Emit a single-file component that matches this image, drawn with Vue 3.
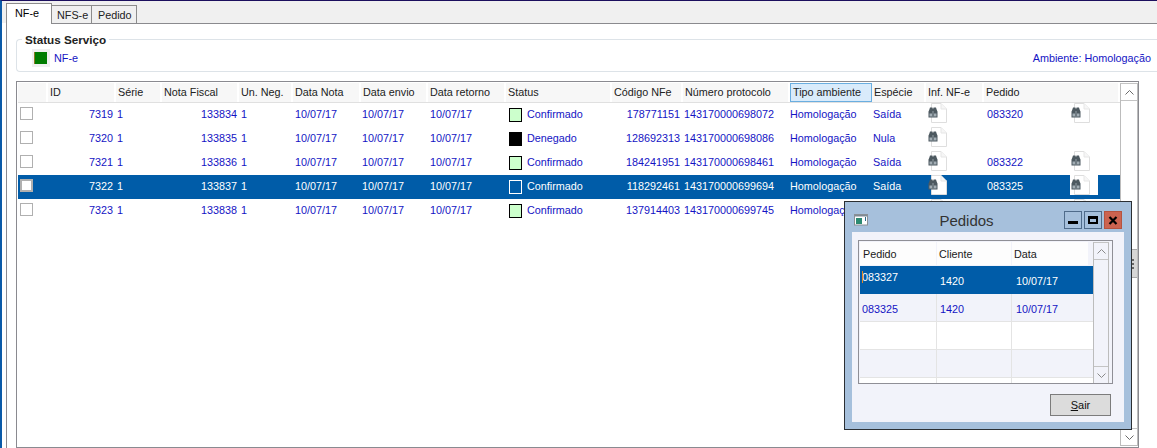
<script setup>
const columns = [
  { label: '', width: 30 },
  { label: 'ID', width: 68 },
  { label: 'Série', width: 46 },
  { label: 'Nota Fiscal', width: 77 },
  { label: 'Un. Neg.', width: 54 },
  { label: 'Data Nota', width: 68 },
  { label: 'Data envio', width: 67 },
  { label: 'Data retorno', width: 78 },
  { label: 'Status', width: 106 },
  { label: 'Código NFe', width: 71 },
  { label: 'Número protocolo', width: 107 },
  { label: 'Tipo ambiente', width: 82, active: true },
  { label: 'Espécie', width: 54 },
  { label: 'Inf. NF-e', width: 58 },
  { label: 'Pedido', width: 136 },
]
const rows = [
  { id: 7319, nota: 133834, status: 'Confirmado', swatch: 'ok', codigo: 178771151, prot: '143170000698072', especie: 'Saída', pedido: '083320', icon: true },
  { id: 7320, nota: 133835, status: 'Denegado', swatch: 'no', codigo: 128692313, prot: '143170000698086', especie: 'Nula', pedido: '', icon: false },
  { id: 7321, nota: 133836, status: 'Confirmado', swatch: 'ok', codigo: 184241951, prot: '143170000698461', especie: 'Saída', pedido: '083322', icon: true },
  { id: 7322, nota: 133837, status: 'Confirmado', swatch: 'sel', codigo: 118292461, prot: '143170000699694', especie: 'Saída', pedido: '083325', icon: true, selected: true },
  { id: 7323, nota: 133838, status: 'Confirmado', swatch: 'ok', codigo: 137914403, prot: '143170000699745', especie: '', pedido: '', icon: true },
]
const orders = [
  { pedido: '083327', cliente: '1420', data: '10/07/17', selected: true },
  { pedido: '083325', cliente: '1420', data: '10/07/17', alt: true },
  { pedido: '', cliente: '', data: '' },
  { pedido: '', cliente: '', data: '', alt: true },
  { pedido: '', cliente: '', data: '', last: true },
]
</script>

<template>
  <div class="window">
    <div class="tabs">
      <div class="tab active">NF-e</div>
      <div class="tab">NFS-e</div>
      <div class="tab">Pedido</div>
    </div>
    <div class="panel">
      <div class="group">
        <div class="group-title">Status Serviço</div>
        <div class="group-row">
          <span class="led"><span class="led-in"></span></span>
          <span class="link">NF-e</span>
          <span class="link env">Ambiente: Homologação</span>
        </div>
      </div>

      <div class="grid">
        <div class="grid-main">
          <div class="head">
            <div v-for="c in columns" :key="c.label" class="hcell" :class="{ hactive: c.active }" :style="{ width: c.width + 'px' }">{{ c.label }}</div>
          </div>
          <div v-for="r in rows" :key="r.id" class="row" :class="{ selected: r.selected }">
            <div class="c c0"><span class="check"></span></div>
            <div class="c c1">{{ r.id }}</div>
            <div class="c c2">1</div>
            <div class="c c3">{{ r.nota }}</div>
            <div class="c c4">1</div>
            <div class="c c5">10/07/17</div>
            <div class="c c6">10/07/17</div>
            <div class="c c7">10/07/17</div>
            <div class="c c8"><span class="swatch" :class="r.swatch"></span>{{ r.status }}</div>
            <div class="c c9">{{ r.codigo }}</div>
            <div class="c c10">{{ r.prot }}</div>
            <div class="c c11">Homologação</div>
            <div class="c c12">{{ r.especie }}</div>
            <div class="c c13">
              <svg class="doc" width="21" height="21" viewBox="0 0 21 21">
                <path d="M4.500 .5H14L19.500 6V19.500H4.500Z" fill="#fff" stroke="#dedede" />
                <path d="M14 .5V6H19.500" fill="#f6f6f6" stroke="#e6e6e6" />
                <path d="M3 4.500h2.500v1h1v-1h2.500l.8 2.500 .7 1.500v6h-9v-6l.7-1.500z" fill="#4d5960" />
                <path d="M2.500 10.500h2.500v3h-2.500zM7 10.500h2.500v3h-2.500z" fill="#a2adb4" />
                <path d="M5.600 8h.8v7h-.8z" fill="#a2adb4" />
              </svg>
            </div>
            <div class="c c14">{{ r.pedido }}</div>
            <div class="c c15">
              <span v-if="r.icon" class="icon-box">
                <svg class="doc" width="21" height="21" viewBox="0 0 21 21">
                  <path d="M4.500 .5H14L19.500 6V19.500H4.500Z" fill="#fff" stroke="#dedede" />
                  <path d="M14 .5V6H19.500" fill="#f6f6f6" stroke="#e6e6e6" />
                  <path d="M3 4.500h2.500v1h1v-1h2.500l.8 2.500 .7 1.500v6h-9v-6l.7-1.500z" fill="#4d5960" />
                  <path d="M2.500 10.500h2.500v3h-2.500zM7 10.500h2.500v3h-2.500z" fill="#a2adb4" />
                  <path d="M5.600 8h.8v7h-.8z" fill="#a2adb4" />
                </svg>
              </span>
            </div>
          </div>
        </div>
        <div class="scroll">
          <div class="sbtn"><svg width="9" height="5" viewBox="0 0 9 5"><path d="M.5 4.500 4.500 .5 8.500 4.500" fill="none" stroke="#6a6a6a" /></svg></div>
          <div class="thumb"><i></i><i></i><i></i></div>
          <div class="sfill"></div>
          <div class="sbtn"><svg width="9" height="5" viewBox="0 0 9 5"><path d="M.5 .5 4.500 4.500 8.500 .5" fill="none" stroke="#6a6a6a" /></svg></div>
        </div>
      </div>
    </div>

    <div class="popup">
      <div class="titlebar">
        <svg class="appicon" width="15" height="12" viewBox="0 0 15 12">
          <rect x=".5" y=".5" width="13" height="10.500" fill="#fff" stroke="#8a9096" />
          <rect x="1" y="1" width="12" height="1.500" fill="#7f8a94" />
          <rect x="2" y="4" width="6" height="6" fill="#2c8a72" />
          <rect x="11" y="3" width="1" height="4" fill="#2c6a8a" />
        </svg>
        <span class="ptitle">Pedidos</span>
        <div class="wbtns">
          <div class="wbtn"><span class="gmin"></span></div>
          <div class="wbtn"><span class="gmax"></span></div>
          <div class="wbtn close">
            <svg width="10" height="9" viewBox="0 0 10 9"><path d="M1.500 1 8.500 8M8.500 1 1.500 8" stroke="#000" stroke-width="2.200" fill="none" /></svg>
          </div>
        </div>
      </div>
      <div class="client">
        <div class="pgrid">
          <div class="pmain">
            <div class="phead">
              <div class="ph">Pedido</div>
              <div class="ph">Cliente</div>
              <div class="ph">Data</div>
            </div>
            <div v-for="(o, i) in orders" :key="i" class="prow" :class="{ psel: o.selected, palt: o.alt, plast: o.last }">
              <div class="pc pc1" :class="{ raised: o.selected }">{{ o.pedido }}<span v-if="o.selected" class="caret"></span></div>
              <div class="pc pc2">{{ o.cliente }}</div>
              <div class="pc pc3">{{ o.data }}</div>
            </div>
          </div>
          <div class="scroll pscroll">
            <div class="sbtn"><svg width="9" height="5" viewBox="0 0 9 5"><path d="M.5 4.500 4.500 .5 8.500 4.500" fill="none" stroke="#8a8a8a" /></svg></div>
            <div class="sfill"></div>
            <div class="sbtn"><svg width="9" height="5" viewBox="0 0 9 5"><path d="M.5 .5 4.500 4.500 8.500 .5" fill="none" stroke="#8a8a8a" /></svg></div>
          </div>
        </div>
        <div class="actions">
          <button class="sair"><u>S</u>air</button>
        </div>
      </div>
    </div>
  </div>
</template>

<style scoped>
.window {
  position: relative;
  box-sizing: border-box;
  width: 1157px;
  height: 448px;
  display: flex;
  flex-direction: column;
  overflow: hidden;
  background: #fff;
  border-top: 1px solid #1c0f5e;
  border-left: 2px solid #0a5aa8;
  font: 10.800px "Liberation Sans", Arial, sans-serif;
  color: #1a1a1a;
}
.tabs {
  flex: none;
  height: 22px;
  display: flex;
  align-items: flex-end;
  padding-left: 4px;
  background: #f0f0f0;
}
.tab {
  box-sizing: border-box;
  width: 40px;
  height: 18px;
  padding: 3px 0 0 5px;
  border: 1px solid #8c8c8c;
  border-bottom: none;
  border-left: none;
  color: #222;
  white-space: nowrap;
}
.tab:nth-child(3) { width: 45px; padding-left: 6px; }
.tab.active {
  position: relative;
  z-index: 1;
  width: 46px;
  height: 21px;
  margin-bottom: -1px;
  padding: 3px 0 0 8px;
  background: #fff;
  border-left: 1px solid #8c8c8c;
  color: #000;
}
.panel {
  flex: 1;
  min-height: 0;
  display: flex;
  flex-direction: column;
  margin-left: 4px;
  padding: 15px 0 0 9px;
  border-top: 1px solid #8a8a8e;
  border-left: 1px solid #8a8a90;
}
.group {
  flex: none;
  box-sizing: border-box;
  height: 33px;
  border: 1px solid #dde3e8;
  border-right: none;
  border-radius: 4px 0 0 4px;
}
.group-title {
  width: fit-content;
  height: 14px;
  margin: -7px 0 0 5px;
  padding: 0 3px;
  background: #fff;
  font-weight: 700;
  font-size: 11.700px;
  line-height: 14px;
  color: #222;
}
.group-row {
  display: flex;
  align-items: center;
  height: 18px;
  margin-top: 2px;
  padding: 0 6px 0 15px;
}
.led {
  display: flex;
  align-items: center;
  width: 18px;
  height: 18px;
  margin-right: 4px;
  padding-left: 2px;
  box-sizing: border-box;
  background: #f0f0f0;
}
.led-in {
  width: 13px;
  height: 12px;
  background: #007c00;
  border-left: 1px solid #8a7a20;
  box-sizing: border-box;
}
.link { color: #1414c4; }
.env { margin-left: auto; }
.grid {
  flex: 1;
  min-height: 0;
  display: flex;
  margin: 9px 18px 0 0;
  padding: 1px 0 0 1px;
  border: 1px solid #8a8a90;
}
.grid-main {
  width: 1102px;
  flex: none;
  min-width: 0;
}
.head {
  display: flex;
  height: 20px;
  border-bottom: 1px solid #e0e0e0;
  box-sizing: border-box;
}
.hcell {
  flex: none;
  box-sizing: border-box;
  height: 19px;
  padding: 2px 0 0 2px;
  line-height: 15px;
  background: #f7f7f7;
  border-right: 2px solid #fff;
  white-space: nowrap;
  color: #222;
}
.hcell.hactive {
  background: #d9ebfb;
  border: 1px solid #6aaee0;
  padding: 1px 0 0 2px;
}
.row {
  display: flex;
  height: 24px;
  line-height: 23px;
  color: #1414c4;
  white-space: nowrap;
}
.row.selected { background: #005ca8; color: #fff; }
.c { flex: none; box-sizing: border-box; height: 24px; }
.c0 { width: 30px; padding: 4px 0 0 2px; }
.c1 { width: 68px; padding-right: 3px; text-align: right; }
.c2 { width: 46px; padding-left: 1px; }
.c3 { width: 77px; padding-right: 2px; text-align: right; }
.c4 { width: 54px; padding-left: 2px; }
.c5 { width: 68px; padding-left: 2px; }
.c6 { width: 67px; padding-left: 1px; }
.c7 { width: 78px; padding-left: 2px; }
.c8 { width: 106px; height: 23px; padding-left: 3px; display: flex; align-items: center; }
.c9 { width: 71px; padding-right: 3px; text-align: right; }
.c10 { width: 107px; padding-left: 1px; }
.c11 { width: 82px; }
.c12 { width: 54px; padding-left: 1px; }
.c13 { width: 58px; padding-left: 1px; }
.c14 { width: 86px; padding-left: 3px; }
.c15 { width: 50px; }
.doc { display: block; }
.check {
  display: block;
  box-sizing: border-box;
  width: 13px;
  height: 13px;
  border: 1px solid #b0b0b0;
  background: #fff;
}
.selected .check { border-width: 2px; }
.swatch {
  flex: none;
  box-sizing: border-box;
  width: 13px;
  height: 14px;
  margin-right: 5px;
  border: 1px solid #000;
}
.swatch.ok { background: #ccffcc; }
.swatch.no { background: #000; }
.swatch.sel { background: #005ca8; border-color: #fff; }
.icon-box {
  display: block;
  width: 28px;
  height: 20px;
}
.selected .icon-box { background: #fff; }
.scroll {
  flex: 1;
  min-width: 0;
  display: flex;
  flex-direction: column;
  margin-bottom: 1px;
  border: 1px solid #bcbcbc;
  border-top: 1px solid #c4c4c4;
  box-sizing: border-box;
}
.sbtn {
  flex: none;
  height: 16px;
  display: flex;
  align-items: center;
  justify-content: center;
  border-bottom: 1px solid #c4c4c4;
}
.sbtn:last-child { border-bottom: none; border-top: 1px solid #c4c4c4; }
.sfill { flex: 1; }
.thumb {
  flex: none;
  height: 29px;
  margin-top: 148px;
  box-sizing: border-box;
  display: flex;
  flex-direction: column;
  align-items: flex-end;
  justify-content: center;
  gap: 2px;
  padding-right: 3px;
  background: #d6d6d6;
  border-top: 1px solid #aaa;
  border-bottom: 1px solid #aaa;
}
.thumb i { width: 2px; height: 2px; background: #666; }

.popup {
  position: absolute;
  left: 842px;
  top: 200px;
  z-index: 2;
  box-sizing: border-box;
  width: 288px;
  height: 229px;
  display: flex;
  flex-direction: column;
  padding: 0 7px 7px;
  background: #a6c0dc;
  border: 1px solid #2b2f33;
}
.titlebar {
  flex: none;
  height: 30px;
  display: flex;
  align-items: center;
  margin: 0 -7px;
  padding: 0 9px;
}
.appicon { flex: none; margin-top: 5px; }
.ptitle {
  flex: 1;
  text-align: center;
  font-size: 15px;
  color: #333;
  margin-top: 6px;
}
.wbtns { display: flex; gap: 2px; margin-top: 6px; }
.wbtn {
  box-sizing: border-box;
  width: 18px;
  height: 18px;
  display: flex;
  align-items: center;
  justify-content: center;
  border: 1px solid #4f6b8a;
}
.wbtn.close { background: #cc6350; border-color: #b5533f; }
.gmin { display: block; width: 10px; height: 3px; margin-top: 5px; background: #000; }
.gmax { display: block; box-sizing: border-box; width: 10px; height: 8px; border: 2px solid #000; border-top-width: 3px; }
.client {
  flex: 1;
  min-height: 0;
  display: flex;
  flex-direction: column;
  padding: 8px 11px 7px 6px;
  background: #f2f3fa;
}
.pgrid {
  flex: none;
  box-sizing: border-box;
  height: 144px;
  display: flex;
  padding: 1px 2px 0 1px;
  border: 1px solid #8f8f96;
  overflow: hidden;
}
.pmain { width: 233px; flex: none; overflow: hidden; }
.phead { display: flex; height: 24px; }
.ph {
  flex: none;
  box-sizing: border-box;
  width: 76px;
  height: 23px;
  margin-right: 1px;
  padding: 2px 0 0 3px;
  line-height: 21px;
  background: #fdfdfd;
  color: #1a1a1a;
}
.ph:nth-child(2) { width: 74px; padding-left: 2px; }
.ph:nth-child(3) { padding-left: 2px; }
.prow {
  display: flex;
  box-sizing: border-box;
  height: 28px;
  background: #fff;
  border-bottom: 1px solid #e4e4e4;
  color: #1414c4;
}
.prow.palt { background: #f2f3fa; }
.prow.psel { background: #005ca8; color: #fff; border-bottom-color: #005ca8; }
.prow.plast { border-bottom: none; }
.pc {
  position: relative;
  flex: none;
  box-sizing: border-box;
  height: 100%;
  padding: 8px 0 0 2px;
  line-height: 14px;
  border-right: 1px solid #e4e4e4;
}
.psel .pc { border-right-color: #005ca8; }
.pc1 { width: 77px; }
.pc2 { width: 75px; padding-left: 3px; }
.pc3 { flex: 1; padding-left: 4px; border-right: none; }
.raised { padding-top: 4px; }
.caret {
  position: absolute;
  left: 2px;
  top: 5px;
  width: 1px;
  height: 12px;
  background: #e08a2a;
}
.pscroll { flex: none; width: 16px; margin: 0; height: 142px; }
.actions { display: flex; justify-content: flex-end; margin-top: 10px; margin-right: 1px; }
.sair {
  box-sizing: border-box;
  width: 61px;
  height: 22px;
  padding: 0;
  margin-right: 1px;
  background: #dcdcdc;
  border: 1px solid #7c7c7c;
  font: 11px "Liberation Sans", Arial, sans-serif;
  color: #111;
}
</style>

<style>
body { margin: 0; }
</style>
